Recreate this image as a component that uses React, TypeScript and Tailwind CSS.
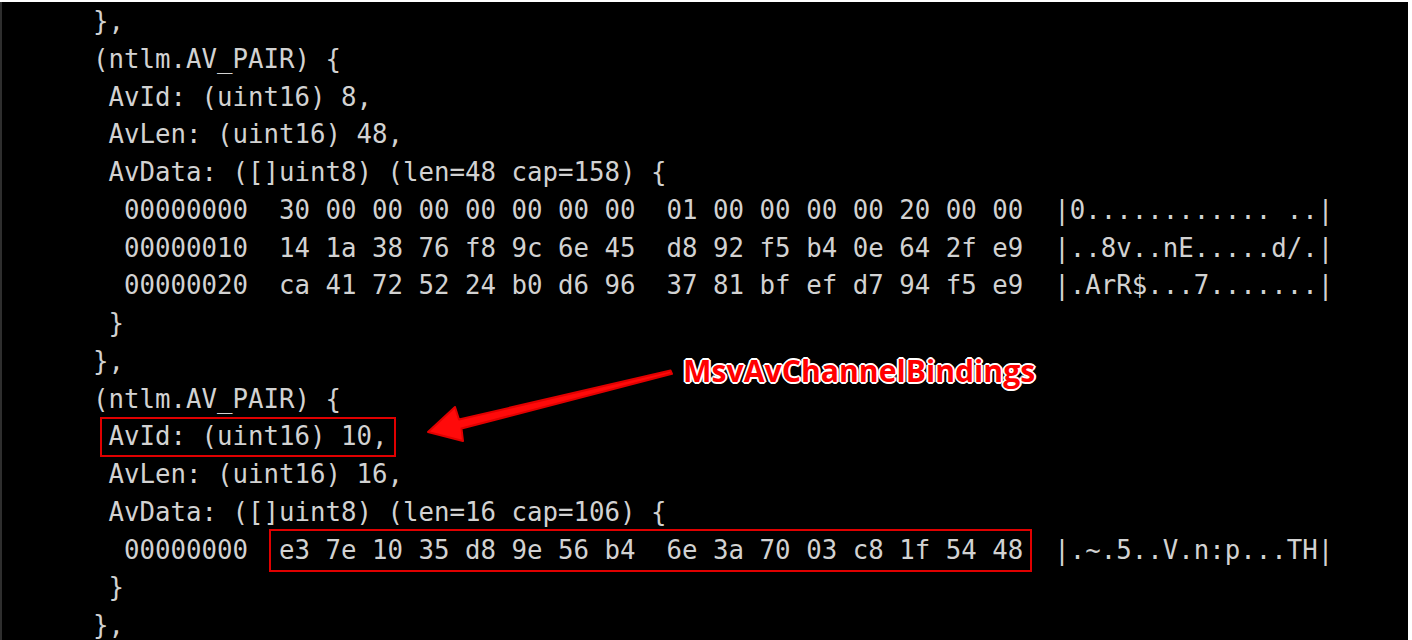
const lines = [
  "},",
  "(ntlm.AV_PAIR) {",
  " AvId: (uint16) 8,",
  " AvLen: (uint16) 48,",
  " AvData: ([]uint8) (len=48 cap=158) {",
  "  00000000  30 00 00 00 00 00 00 00  01 00 00 00 00 20 00 00  |0............ ..|",
  "  00000010  14 1a 38 76 f8 9c 6e 45  d8 92 f5 b4 0e 64 2f e9  |..8v..nE.....d/.|",
  "  00000020  ca 41 72 52 24 b0 d6 96  37 81 bf ef d7 94 f5 e9  |.ArR$...7.......|",
  " }",
  "},",
  "(ntlm.AV_PAIR) {",
  " AvId: (uint16) 10,",
  " AvLen: (uint16) 16,",
  " AvData: ([]uint8) (len=16 cap=106) {",
  "  00000000  e3 7e 10 35 d8 9e 56 b4  6e 3a 70 03 c8 1f 54 48  |.~.5..V.n:p...TH|",
  " }",
  "},",
];

function Arrow() {
  return (
    <svg
      className="pointer-events-none absolute left-0 top-0"
      width={1412}
      height={640}
      viewBox="0 0 1412 640"
    >
      <polygon
        points="428,432 455,407 459,419.5 670.5,370.5 672,373.8 461.5,428.5 463,441"
        fill="#ff0a0a"
        stroke="#e10000"
        strokeWidth={2}
        strokeLinejoin="round"
      />
    </svg>
  );
}

export default function App() {
  return (
    <div className="relative h-[640px] w-[1412px] overflow-hidden bg-white">
      <div className="mt-[2px] h-[638px] w-[1408px] border-l-2 border-[#2e2e2e] bg-black">
        <pre className="pl-[91px] pt-[1px] font-['DejaVu_Sans_Mono',monospace] text-[25.75px] leading-[37.75px] text-[#d2d2d2]">
          {lines.join("\n")}
        </pre>
      </div>

      {/* annotations */}
      <div className="absolute left-[100px] top-[417px] h-[40px] w-[296px] border-2 border-[#e00000]" />
      <div className="absolute left-[269px] top-[529px] h-[43px] w-[763px] border-2 border-[#e00000]" />
      <Arrow />
      <div className="absolute left-[683px] top-[350px] font-['Open_Sans',sans-serif] text-[30.2px] font-bold leading-[42px] text-[#ff0000] [text-shadow:0_0_2px_#fff,1px_1px_0_#fff,-1px_-1px_0_#fff,1px_-1px_0_#fff,-1px_1px_0_#fff,2px_0_0_#fff,-2px_0_0_#fff,0_2px_0_#fff,0_-2px_0_#fff]">
        MsvAvChannelBindings
      </div>
    </div>
  );
}
